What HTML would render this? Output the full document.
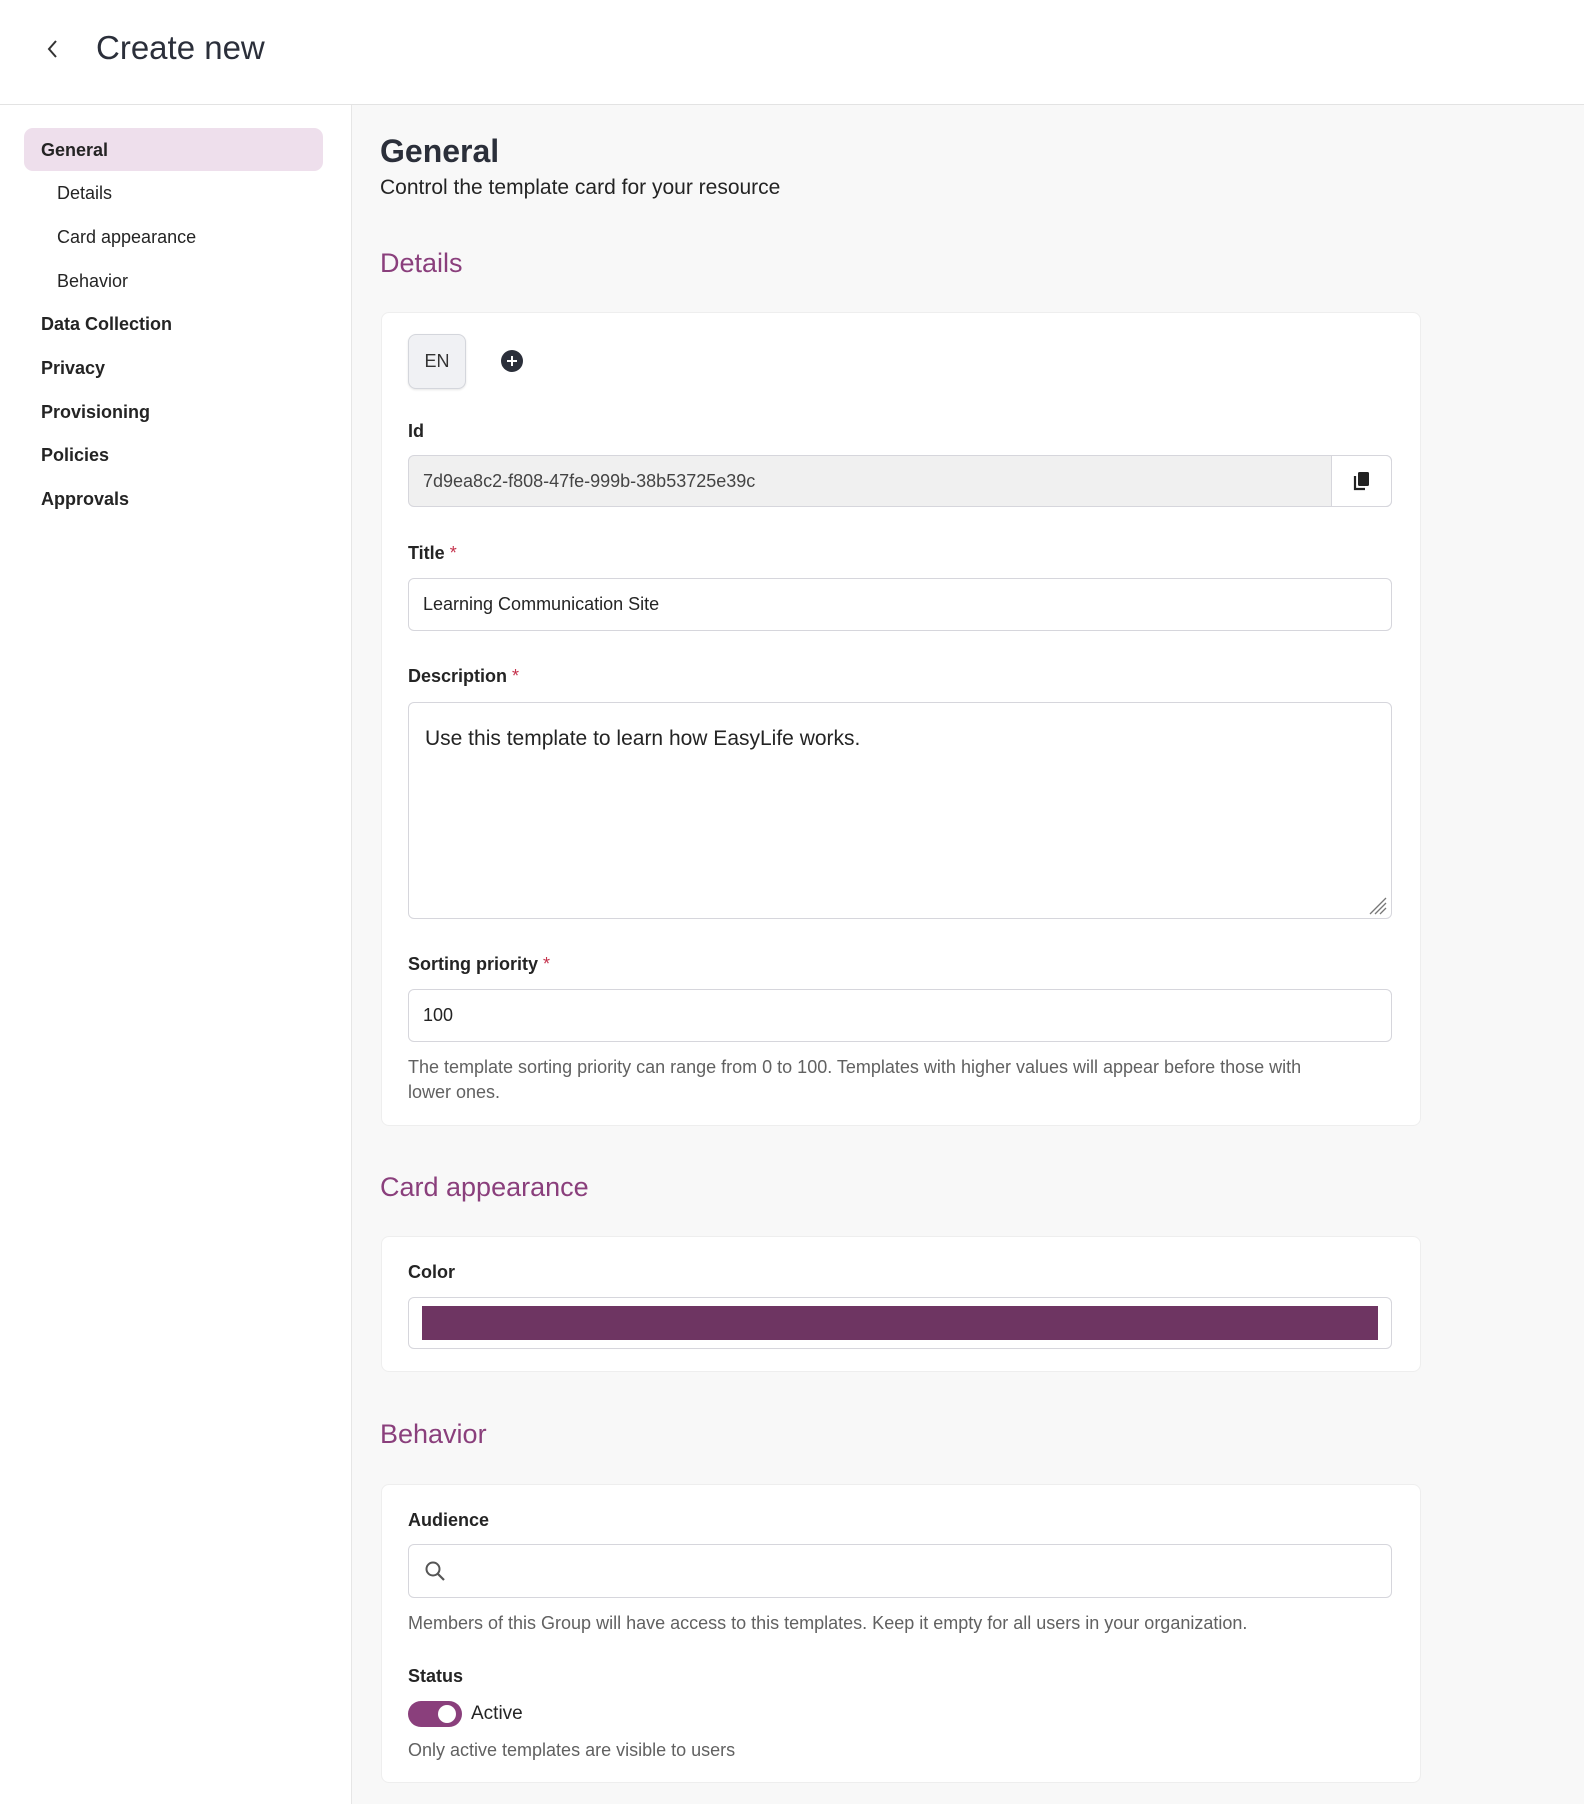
<!DOCTYPE html>
<html><head><meta charset="utf-8"><style>
*{box-sizing:border-box;margin:0;padding:0}
body{width:1584px;height:1804px;overflow:hidden;background:#f8f8f8;font-family:"Liberation Sans",sans-serif;color:#242424;position:relative}
.hdr{position:absolute;left:0;top:0;width:1584px;height:105px;background:#fff;border-bottom:1px solid #e3e3e3}
.hdr .t{position:absolute;left:96px;top:29px;font-size:33px;color:#2b2f3a}
.side{position:absolute;left:0;top:105px;width:352px;height:1699px;background:#fff;border-right:1px solid #e6e6e6}
.pill{position:absolute;left:24px;top:23px;width:299px;height:43px;background:#eedfec;border-radius:9px}
.nav{position:absolute;font-size:18px;color:#242424}
.nav.b{font-weight:bold;left:41px}
.nav.s{left:57px}
.a{position:absolute}
.h1{left:380px;top:133px;font-size:32px;font-weight:bold;color:#2b2f3a}
.sub{left:380px;top:176px;font-size:21px}
.h2{left:380px;font-size:27px;color:#8a3f7c}
.card{position:absolute;left:381px;width:1040px;background:#fff;border:1px solid #eeeeee;border-radius:8px}
.lbl{position:absolute;left:408px;font-size:18px;font-weight:bold}
.lbl i{color:#c4314b;font-style:normal;font-weight:normal}
.inp{position:absolute;left:408px;width:984px;background:#fff;border:1px solid #d6d6dc;border-radius:6px;font-size:18px;padding-left:14px;display:flex;align-items:center}
.help{position:absolute;left:408px;font-size:18px;color:#616161;line-height:25px}
</style></head><body>
<div class="hdr">
<svg class="a" style="left:45px;top:38px" width="16" height="22" viewBox="0 0 16 22"><path d="M11 3 L4 11 L11 19" fill="none" stroke="#333" stroke-width="2"/></svg>
<div class="t">Create new</div></div>
<div class="side">
<div class="pill"></div>
<div class="nav b" style="top:35px">General</div>
<div class="nav s" style="top:78px">Details</div>
<div class="nav s" style="top:122px">Card appearance</div>
<div class="nav s" style="top:166px">Behavior</div>
<div class="nav b" style="top:209px">Data Collection</div>
<div class="nav b" style="top:253px">Privacy</div>
<div class="nav b" style="top:297px">Provisioning</div>
<div class="nav b" style="top:340px">Policies</div>
<div class="nav b" style="top:384px">Approvals</div>
</div>
<div class="a h1">General</div>
<div class="a sub">Control the template card for your resource</div>
<div class="a h2" style="top:248px">Details</div>
<div class="card" style="top:312px;height:814px"></div>
<div class="a" style="left:408px;top:334px;width:58px;height:55px;background:#f0f1f4;border:1px solid #d4d6dc;border-radius:8px;font-size:18px;display:flex;align-items:center;justify-content:center;color:#333;box-shadow:0 1px 2px rgba(0,0,0,.1)">EN</div>
<svg class="a" style="left:501px;top:350px" width="22" height="22" viewBox="0 0 22 22"><circle cx="11" cy="11" r="11" fill="#2b2f3a"/><path d="M11 6v10M6 11h10" stroke="#fff" stroke-width="2"/></svg>
<div class="lbl" style="top:421px">Id</div>
<div class="inp" style="top:455px;height:52px;background:#f0f0f0;color:#444">7d9ea8c2-f808-47fe-999b-38b53725e39c</div>
<div class="a" style="left:1331px;top:455px;width:61px;height:52px;background:#fff;border:1px solid #d6d6dc;border-radius:0 6px 6px 0"></div>
<svg class="a" style="left:1352px;top:470px" width="20" height="22" viewBox="0 0 20 22"><rect x="6" y="2" width="11" height="14" rx="1.5" fill="#222"/><path d="M3 6v13h10" fill="none" stroke="#222" stroke-width="2.2"/></svg>
<div class="lbl" style="top:543px">Title <i>*</i></div>
<div class="inp" style="top:578px;height:53px">Learning Communication Site</div>
<div class="lbl" style="top:666px">Description <i>*</i></div>
<div class="inp" style="top:702px;height:217px;align-items:flex-start;padding-top:24px;font-size:21px;padding-left:16px">Use this template to learn how EasyLife works.</div>
<svg class="a" style="left:1368px;top:896px" width="20" height="20" viewBox="0 0 20 20"><path d="M2 18L18 2M7 18L18 7M12 18L18 12" stroke="#777" stroke-width="1.3"/></svg>
<div class="lbl" style="top:954px">Sorting priority <i>*</i></div>
<div class="inp" style="top:989px;height:53px">100</div>
<div class="help" style="top:1055px;width:930px">The template sorting priority can range from 0 to 100. Templates with higher values will appear before those with lower ones.</div>
<div class="a h2" style="top:1172px">Card appearance</div>
<div class="card" style="top:1236px;height:136px"></div>
<div class="lbl" style="top:1262px">Color</div>
<div class="inp" style="top:1297px;height:52px"></div>
<div class="a" style="left:422px;top:1306px;width:956px;height:34px;background:#6e3562"></div>
<div class="a h2" style="top:1419px">Behavior</div>
<div class="card" style="top:1484px;height:299px"></div>
<div class="lbl" style="top:1510px">Audience</div>
<div class="inp" style="top:1544px;height:54px"></div>
<svg class="a" style="left:424px;top:1560px" width="22" height="22" viewBox="0 0 22 22"><circle cx="9" cy="9" r="6.5" fill="none" stroke="#555" stroke-width="2"/><path d="M14 14l6 6" stroke="#555" stroke-width="2.2"/></svg>
<div class="help" style="top:1611px">Members of this Group will have access to this templates. Keep it empty for all users in your organization.</div>
<div class="lbl" style="top:1666px">Status</div>
<div class="a" style="left:408px;top:1701px;width:54px;height:26px;border-radius:13px;background:#8a3f7c"></div>
<div class="a" style="left:438px;top:1705px;width:18px;height:18px;border-radius:50%;background:#fff"></div>
<div class="a" style="left:471px;top:1703px;font-size:19px">Active</div>
<div class="help" style="top:1738px">Only active templates are visible to users</div>
</body></html>
